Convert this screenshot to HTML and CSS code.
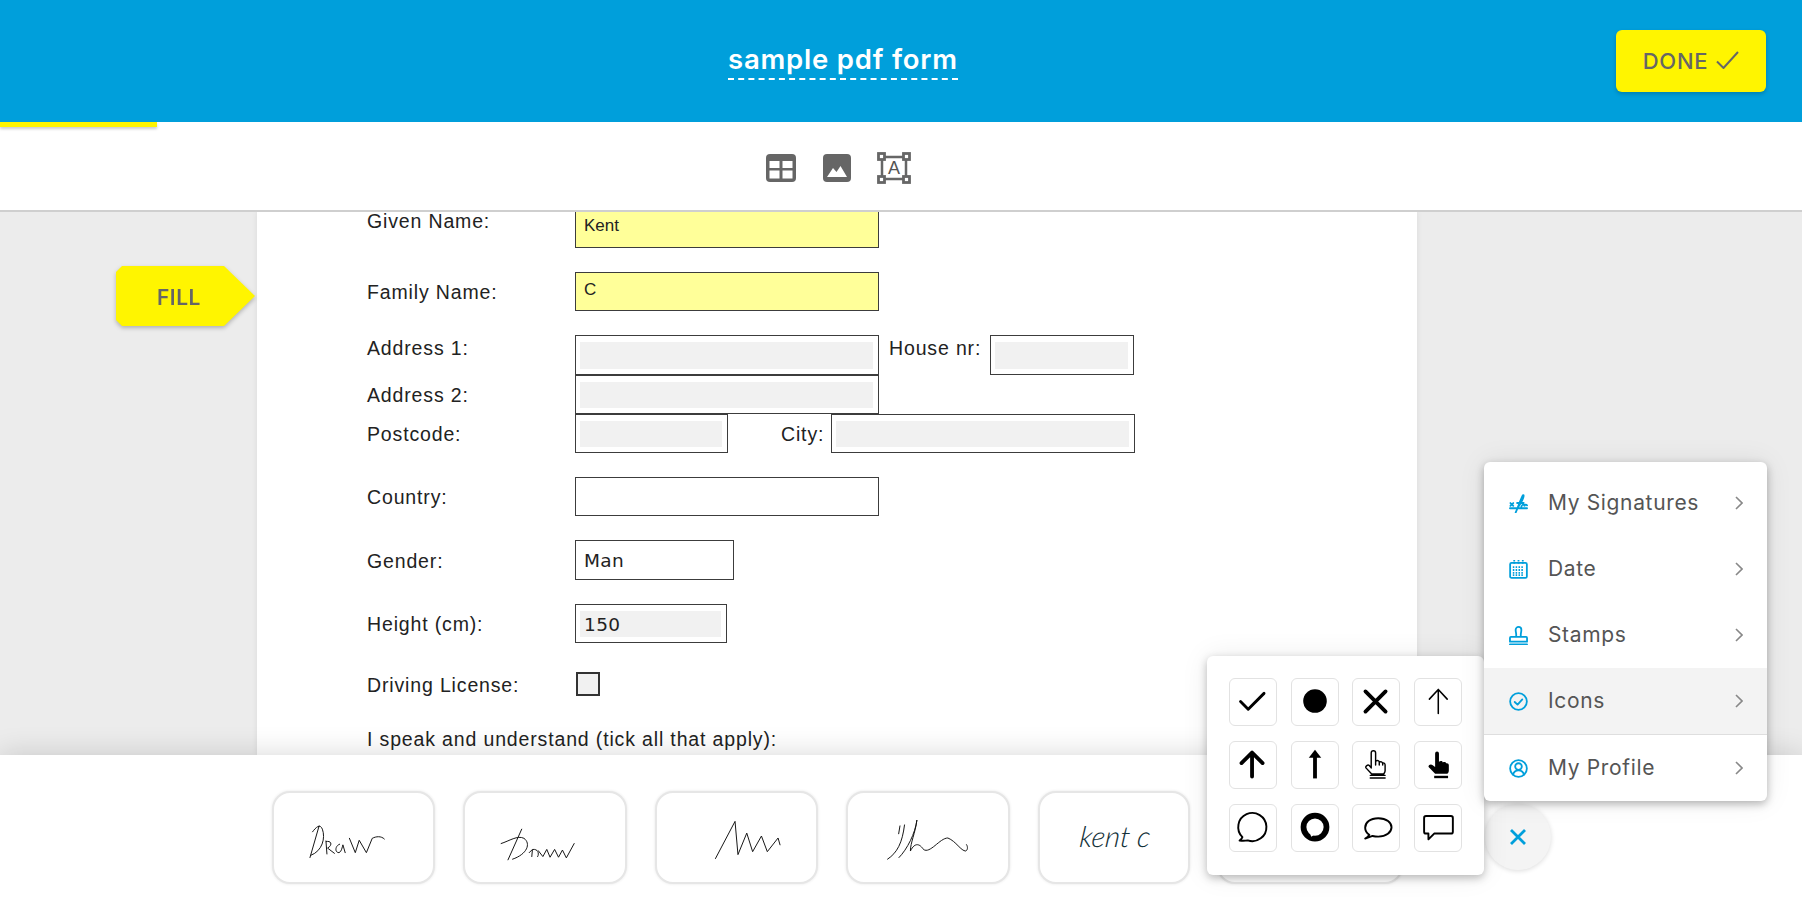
FILE: index.html
```html
<!DOCTYPE html>
<html lang="en">
<head>
<meta charset="utf-8">
<title>sample pdf form</title>
<link rel="stylesheet" href="styles.css">
</head>
<body>
<div class="app">
  <header class="header">
    <h1 class="title">sample pdf form</h1>
    <button class="done">DONE
      <svg class="done-check" viewBox="0 0 23 18"><path d="M1 10.500l6.500 6.500L22 1"/></svg>
    </button>
  </header>
  <div class="toolbar">
    <span class="progress"></span>
    <svg class="tool tool-table" viewBox="0 0 30 28"><rect width="30" height="28" rx="4" class="tool-solid"/><rect x="3.500" y="7" width="10" height="7" class="tool-hole"/><rect x="16.500" y="7" width="10" height="7" class="tool-hole"/><rect x="3.500" y="16.500" width="10" height="8" class="tool-hole"/><rect x="16.500" y="16.500" width="10" height="8" class="tool-hole"/></svg>
    <svg class="tool tool-image" viewBox="0 0 28 28"><rect width="28" height="28" rx="4" class="tool-solid"/><path d="M4 23l6-9 3.500 4 4-6L24 23z" class="tool-hole"/></svg>
    <span class="tool-text">
      <svg class="tool-frame" viewBox="0 0 34 32"><rect x="5" y="5" width="24" height="22" class="tool-line"/><rect x="1.500" y="1.500" width="6" height="6" class="tool-handle"/><rect x="26.500" y="1.500" width="6" height="6" class="tool-handle"/><rect x="1.500" y="24.500" width="6" height="6" class="tool-handle"/><rect x="26.500" y="24.500" width="6" height="6" class="tool-handle"/></svg>
      <span class="tool-letter">A</span>
    </span>
  </div>

  <main class="workspace">
    <div class="fill-tag"><span>FILL</span></div>
    <section class="page">
      <div class="form">
        <div class="row row-first">
          <label class="label label-high">Given Name:</label>
          <div class="field w304 yellow"><span class="value value-sans value-low">Kent</span></div>
        </div>
        <div class="row">
          <label class="label">Family Name:</label>
          <div class="field w304 yellow"><span class="value value-sans value-high">C</span></div>
        </div>
        <div class="group">
          <div class="row row-40">
            <label class="label label-high">Address 1:</label>
            <div class="field w304 inset"><span class="shade"></span></div>
            <label class="label label-house label-high">House nr:</label>
            <div class="field w144 inset"><span class="shade"></span></div>
          </div>
          <div class="row">
            <label class="label">Address 2:</label>
            <div class="field w304 inset"><span class="shade"></span></div>
          </div>
          <div class="row">
            <label class="label">Postcode:</label>
            <div class="field w153 inset"><span class="shade"></span></div>
            <label class="label label-city">City:</label>
            <div class="field w304 inset"><span class="shade"></span></div>
          </div>
        </div>
        <div class="row">
          <label class="label">Country:</label>
          <div class="field w304"></div>
        </div>
        <div class="row row-40">
          <label class="label">Gender:</label>
          <div class="field w159"><span class="value">Man</span></div>
        </div>
        <div class="row">
          <label class="label">Height (cm):</label>
          <div class="field w152 inset"><span class="shade"><span class="value value-flush">150</span></span></div>
        </div>
        <div class="row row-check">
          <label class="label">Driving License:</label>
          <span class="checkbox"></span>
        </div>
        <div class="row row-note">
          <label class="label label-wide">I speak and understand (tick all that apply):</label>
        </div>
      </div>
    </section>
  </main>

  <footer class="tray">
    <div class="sig w163">
      <svg class="sig-art" viewBox="38 67 485 273"><path d="M147 265L175 168M155 186C165 172 178 160 185 178C195 205 185 245 150 258M196 214L199 254M197 216C212 212 218 226 201 236L222 252M238 224C224 228 222 250 236 250C244 248 246 232 248 226L255 250M268 206L286 250L298 212L320 250L338 206C350 200 365 198 375 208"/></svg>
    </div>
    <div class="sig w164">
      <svg class="sig-art" viewBox="611 67 487 273"><path d="M783 178L741 272M720 222C745 214 770 196 790 206C812 222 800 255 755 270M806 250L816 240L814 262M818 240C832 238 838 252 832 262M834 244L848 262L860 240L870 264L884 240L896 264L908 242L920 266L944 222"/></svg>
    </div>
    <div class="sig w163">
      <svg class="sig-art sig-art-fine" viewBox="656 792 161 91"><path d="M715 859L735 821L738 855L747 833L753 852L762 836L768 852L779 838L781 845"/></svg>
    </div>
    <div class="sig w164">
      <svg class="sig-art" viewBox="260 67 488 273"><path d="M380 270C410 250 425 220 432 165M418 168L414 192M415 265C440 240 465 190 470 150C465 190 450 220 450 245C465 215 480 225 490 240C510 255 540 205 565 205C590 215 605 245 620 245C628 240 625 228 622 225"/></svg>
    </div>
    <div class="sig w152"><span class="sig-text">kent c</span></div>
    <div class="sig w186"></div>
  </footer>

  <div class="popover">
    <button class="tile"><svg viewBox="0 0 48 48"><path class="s3" d="M11 23.500l8 8L35.500 15"/></svg></button>
    <button class="tile"><svg viewBox="0 0 48 48"><circle cx="24" cy="23" r="12.300"/></svg></button>
    <button class="tile"><svg viewBox="0 0 48 48"><path class="s4" d="M13 13l21 21M34 13L13 34"/></svg></button>
    <button class="tile"><svg viewBox="0 0 48 48"><path class="s1" d="M24.300 36V11M15 21l9.300-10 9.300 10"/></svg></button>
    <button class="tile"><svg viewBox="0 0 48 48"><path class="s4" d="M23 36V11M12 22l11-11 11 11"/></svg></button>
    <button class="tile"><svg viewBox="0 0 48 48"><path class="s4 butt" d="M24 38V15"/><path d="M17.500 16.500L24 8l6.500 8.500z"/></svg></button>
    <button class="tile"><svg viewBox="0 0 48 48"><path class="s1b" d="M19 27V11.500a2.300 2.300 0 0 1 4.600 0V20c2-1.300 3.600-.6 3.800 1 1.700-1 3.200-.3 3.400 1.200 1.500-.7 2.700 0 2.700 1.800v6c0 1.800-1 2.600-1.500 3.400H19.500L13.500 27c-.8-1.800 2-3.800 3.500-2.400l2 2.400M23.600 24v-4M27.400 24v-3M31 24v-2M18 34.800h15.500M18 37.500h15.500"/></svg></button>
    <button class="tile"><svg viewBox="0 0 48 48"><path d="M21 12a2 2 0 0 1 4 0v8.500c2-1 3.600-.6 4 .8 1.700-.8 3.300-.2 3.500 1 1.500-.5 2.800 .3 2.800 2V30c0 1.800-1 2.500-1.500 3.200H21L14.200 26c-.7-1.800 2.300-3.700 4.300-1.800l2.500 2z"/><path class="s2b" d="M20 36.500h14.500"/></svg></button>
    <button class="tile"><svg viewBox="0 0 48 48"><path class="s2" d="M13 33.500a14.700 14.700 0 1 1 5.500 3.400c-2.500 .6-5 .6-8.500 .3 1.500-1 2.600-2.200 3-3.700z"/></svg></button>
    <button class="tile"><svg viewBox="0 0 48 48"><circle class="s6" cx="24" cy="23" r="12"/><path d="M19 30h6l-5 3z" class="fill-white"/></svg></button>
    <button class="tile"><svg viewBox="0 0 48 48"><path class="s2" d="M17 31c-3-1.800-4.300-4.300-4.300-7.200 0-5.500 5-10 13.700-10s13.800 4.500 13.800 9.500-5.500 9.700-13.800 9.700c-2 0-4-.2-6-.7L12.700 35c2-1 3.500-2.400 4.300-4z"/></svg></button>
    <button class="tile"><svg viewBox="0 0 48 48"><path class="s2" d="M11.500 11.500h26a2 2 0 0 1 2 2v14.300a2 2 0 0 1-2 2H20l-6 6v-6h-2.500a2 2 0 0 1-2-2V13.500a2 2 0 0 1 2-2z"/></svg></button>
  </div>

  <nav class="menu">
    <a class="item">
      <svg class="item-icon" viewBox="0 0 20 20"><path d="M1 15h18M1.500 9.500l3 3M4.500 9.500l-3 3M7 19.500C10 13 12 6 14.500 1.500c1.500-1.500 1 2-.5 5-2 4-4 7-5.500 9M8.500 9.500h7M13 13.500c1-3 2.500-3 3-1.500s1-2.500 3 0"/></svg>
      <span class="item-label">My Signatures</span>
      <svg class="chevron" viewBox="0 0 8 14"><path d="M1 1l6 6-6 6"/></svg>
    </a>
    <a class="item">
      <svg class="item-icon" viewBox="0 0 20 20"><rect x="1.200" y="3" width="17.600" height="15.800" rx="1.500"/><path class="dots" d="M4 7.500h12M4 10.500h12M4 13.500h12M4 16h12M5.500 0v4M10 0v4M14.500 0v4"/></svg>
      <span class="item-label">Date</span>
      <svg class="chevron" viewBox="0 0 8 14"><path d="M1 1l6 6-6 6"/></svg>
    </a>
    <a class="item">
      <svg class="item-icon" viewBox="0 0 20 20"><path d="M7.500 11C8 8 7 7 7 4a3 3 0 0 1 6 0c0 3-1 4-.5 7M2 11.500h16c.5 0 1 .5 1 1v4H1v-4c0-.5 .5-1 1-1zM1 19.500h18"/></svg>
      <span class="item-label">Stamps</span>
      <svg class="chevron" viewBox="0 0 8 14"><path d="M1 1l6 6-6 6"/></svg>
    </a>
    <a class="item item-active">
      <svg class="item-icon" viewBox="0 0 20 20"><circle cx="10" cy="10" r="8.800"/><path d="M6 10.500l3 2.800 5-5.500"/></svg>
      <span class="item-label">Icons</span>
      <svg class="chevron" viewBox="0 0 8 14"><path d="M1 1l6 6-6 6"/></svg>
    </a>
    <a class="item item-split">
      <svg class="item-icon" viewBox="0 0 20 20"><circle cx="10" cy="10" r="8.800"/><circle cx="10" cy="8" r="3.500"/><path d="M4.300 16.500c.7-3 3-4.500 5.700-4.500s5 1.500 5.700 4.500"/></svg>
      <span class="item-label">My Profile</span>
      <svg class="chevron" viewBox="0 0 8 14"><path d="M1 1l6 6-6 6"/></svg>
    </a>
  </nav>

  <button class="fab"><svg viewBox="0 0 16 16"><path d="M1 1l14 14M15 1L1 15"/></svg></button>
</div>
</body>
</html>
```

FILE: styles.css
```css
* { box-sizing: border-box; }
html, body { margin: 0; height: 100%; }
body { font-family: "Liberation Sans", Arial, sans-serif; background: #fff; overflow: hidden; }
button { font: inherit; border: 0; padding: 0; background: none; }

.app { position: relative; display: flex; flex-direction: column; width: 1802px; height: 906px; overflow: hidden; }

/* header */
.header { flex: none; height: 122px; display: flex; align-items: flex-start; background: #009fdb; padding: 30px 36px 0 728px; position: relative; z-index: 3; }
.title { margin: 14px 0 0; height: 36px; border-bottom: 2px dashed #fff; font: 600 27.500px/30px Inter, sans-serif; color: #fff; letter-spacing: .8px; white-space: nowrap; }
.done { margin-left: auto; width: 150px; height: 62px; display: flex; align-items: center; justify-content: center; gap: 8px; background: #fff500; border-radius: 6px; box-shadow: 0 2px 4px rgba(0,0,0,.2); font: 500 22px/1 Inter, sans-serif; color: #666; letter-spacing: .7px; }
.done-check { width: 23px; height: 18px; fill: none; stroke: #666; stroke-width: 2; margin-top: -3px; }

/* toolbar */
.toolbar { flex: none; height: 90px; position: relative; display: flex; align-items: center; padding-left: 766px; background: #fff; border-bottom: 2px solid #cfcfcf; z-index: 2; }
.progress { position: absolute; left: 0; top: 0; width: 157px; height: 5px; background: #fff500; box-shadow: 0 2px 3px rgba(0,0,0,.2); }
.tool { flex: none; height: 28px; margin-top: 3px; }
.tool-table { width: 30px; }
.tool-image { width: 28px; margin-left: 27px; }
.tool-solid { fill: #666; }
.tool-hole { fill: #fff; }
.tool-text { position: relative; flex: none; width: 34px; height: 32px; margin: 3px 0 0 26px; display: flex; align-items: center; justify-content: center; }
.tool-frame { position: absolute; inset: 0; width: 34px; height: 32px; }
.tool-line { fill: none; stroke: #666; stroke-width: 2.500; }
.tool-handle { fill: #fff; stroke: #666; stroke-width: 2.800; }
.tool-letter { position: relative; font: 18px/1 "Liberation Sans", sans-serif; color: #555; }

/* workspace */
.workspace { flex: 1 1 auto; min-height: 0; position: relative; overflow: hidden; background: #ececec; padding-left: 257px; }
.page { width: 1160px; height: 100%; background: #fff; box-shadow: 0 0 6px rgba(0,0,0,.08); padding-left: 110px; overflow: hidden; }
.form { display: flex; flex-direction: column; gap: 24px; }
.group { display: flex; flex-direction: column; }
.row { display: flex; align-items: center; height: 39px; }
.row-first { margin-top: -3px; }
.row-40 { height: 40px; }
.row-check { height: 34px; }
.row-note { height: 28px; }
.label { flex: none; width: 208px; margin-top: 1px; font-size: 19.500px; line-height: 18px; letter-spacing: .85px; color: #222; white-space: nowrap; }
.label-high { margin-top: 0; margin-bottom: 15px; }
.label-wide { width: auto; margin-top: 0; }
.label-house { width: 101px; margin-left: 10px; }
.label-city { width: 50px; margin-left: 53px; }
.field { flex: none; height: 100%; border: 1px solid #3c3c3c; padding: 0 8px; display: flex; align-items: center; background: #fff; }
.field.yellow { background: #ffff99; }
.field.inset { padding: 6px 5px 5px 4px; }
.shade { flex: 1; align-self: stretch; display: flex; align-items: center; background: #f1f1f1; }
.w304 { width: 304px; }
.w159 { width: 159px; }
.w153 { width: 153px; }
.w152 { width: 152px; }
.w144 { width: 144px; }
.value { margin-top: 2px; font: 18.500px/1 "DejaVu Sans", sans-serif; color: #222; letter-spacing: .4px; }
.value-flush { margin-left: 4px; }
.value-sans { margin: 0; font: 17px/1 "Liberation Sans", sans-serif; letter-spacing: 0; }
.value-low { margin-bottom: 6px; }
.value-high { margin-bottom: 4px; }
.checkbox { flex: none; width: 24px; height: 24px; margin-left: 1px; border: 2px solid #333; background: #f1f1f1; }

/* fill marker */
.fill-tag { position: absolute; left: 116px; top: 54px; width: 139px; height: 60px; filter: drop-shadow(0 2px 2px rgba(0,0,0,.25)); }
.fill-tag::before { content: ""; position: absolute; inset: 0; background: #fff500; clip-path: polygon(6px 0, 108px 0, 100% 50%, 108px 100%, 6px 100%, 0 calc(100% - 6px), 0 6px); }
.fill-tag span { position: absolute; left: 41px; top: 22px; font: 600 21px/20px Inter, sans-serif; color: #666; letter-spacing: .5px; }

/* signature tray */
.tray { flex: none; height: 151px; display: flex; gap: 28px; padding: 36px 0 0 272px; background: #fff; box-shadow: 0 0 28px rgba(0,0,0,.16); position: relative; z-index: 1; }
.sig { flex: none; height: 93px; display: flex; align-items: center; justify-content: center; background: #fff; border: 2px solid #e6e6e6; border-radius: 18px; box-shadow: 0 0 3px rgba(0,0,0,.1); }
.w163 { width: 163px; }
.w164 { width: 164px; }
.w152 { width: 152px; }
.w186 { width: 186px; margin-left: -1px; }
.sig-art { width: 100%; height: 100%; fill: none; stroke: #111; stroke-width: 3; stroke-linecap: round; stroke-linejoin: round; }
.sig-art-fine { stroke-width: 1; }
.sig-text { font: italic 300 29px/1 Lato, sans-serif; color: #14323a; transform: skewX(-6deg); margin: 0 0 5px 2px; }

/* icon popover */
.popover { position: absolute; left: 1207px; top: 656px; width: 277px; height: 219px; display: grid; grid-template-columns: repeat(4, 48px); grid-auto-rows: 48px; column-gap: 13.700px; row-gap: 15px; padding: 22px; background: #fff; border-radius: 6px; box-shadow: 0 3px 8px rgba(0,0,0,.25), 0 0 28px rgba(0,0,0,.08); z-index: 5; }
.tile { display: block; width: 48px; height: 48px; border: 1px solid #e2e2e2; border-radius: 6px; background: #fff; }
.tile svg { display: block; width: 46px; height: 46px; fill: #000; stroke: none; }
.tile .s1, .tile .s1b, .tile .s2, .tile .s2b, .tile .s3, .tile .s4, .tile .s6 { fill: none; stroke: #000; stroke-linecap: round; stroke-linejoin: round; }
.tile .s1 { stroke-width: 1.600; }
.tile .s1b { stroke-width: 1.500; }
.tile .s2 { stroke-width: 2; }
.tile .s2b { stroke-width: 2.500; stroke-linecap: butt; }
.tile .s3 { stroke-width: 3; }
.tile .s4 { stroke-width: 4; }
.tile .s6 { stroke-width: 6; }
.tile .butt { stroke-linecap: butt; }
.tile .fill-white { fill: #fff; }

/* side menu */
.menu { position: absolute; left: 1484px; top: 462px; width: 283px; height: 339px; padding-top: 8px; display: flex; flex-direction: column; background: #fff; border-radius: 6px; box-shadow: 0 3px 8px rgba(0,0,0,.28), 0 0 28px rgba(0,0,0,.08); z-index: 6; overflow: hidden; }
.item { flex: none; height: 66px; display: flex; align-items: center; padding: 0 24px 0 25px; }
.item-active { background: #f3f3f3; }
.item-split { height: 67px; border-top: 1px solid #dedede; }
.item-icon { flex: none; width: 19px; height: 19px; fill: none; stroke: #009fdb; stroke-width: 1.900; stroke-linecap: round; stroke-linejoin: round; }
.dots { stroke-dasharray: 1.600 1.400; stroke-linecap: butt; }
.item-label { flex: 1; margin: 0 0 2px 20px; font: 400 21px/1 Inter, sans-serif; color: #555; letter-spacing: .65px; }
.chevron { flex: none; width: 8px; height: 14px; fill: none; stroke: #888; stroke-width: 1.600; }

/* close */
.fab { position: absolute; left: 1485px; top: 804px; width: 66px; height: 66px; display: flex; align-items: center; justify-content: center; border-radius: 50%; background: #f4f4f4; box-shadow: 0 1px 5px rgba(0,0,0,.14); z-index: 4; }
.fab svg { width: 16px; height: 16px; fill: none; stroke: #009fdb; stroke-width: 2.800; }
```
